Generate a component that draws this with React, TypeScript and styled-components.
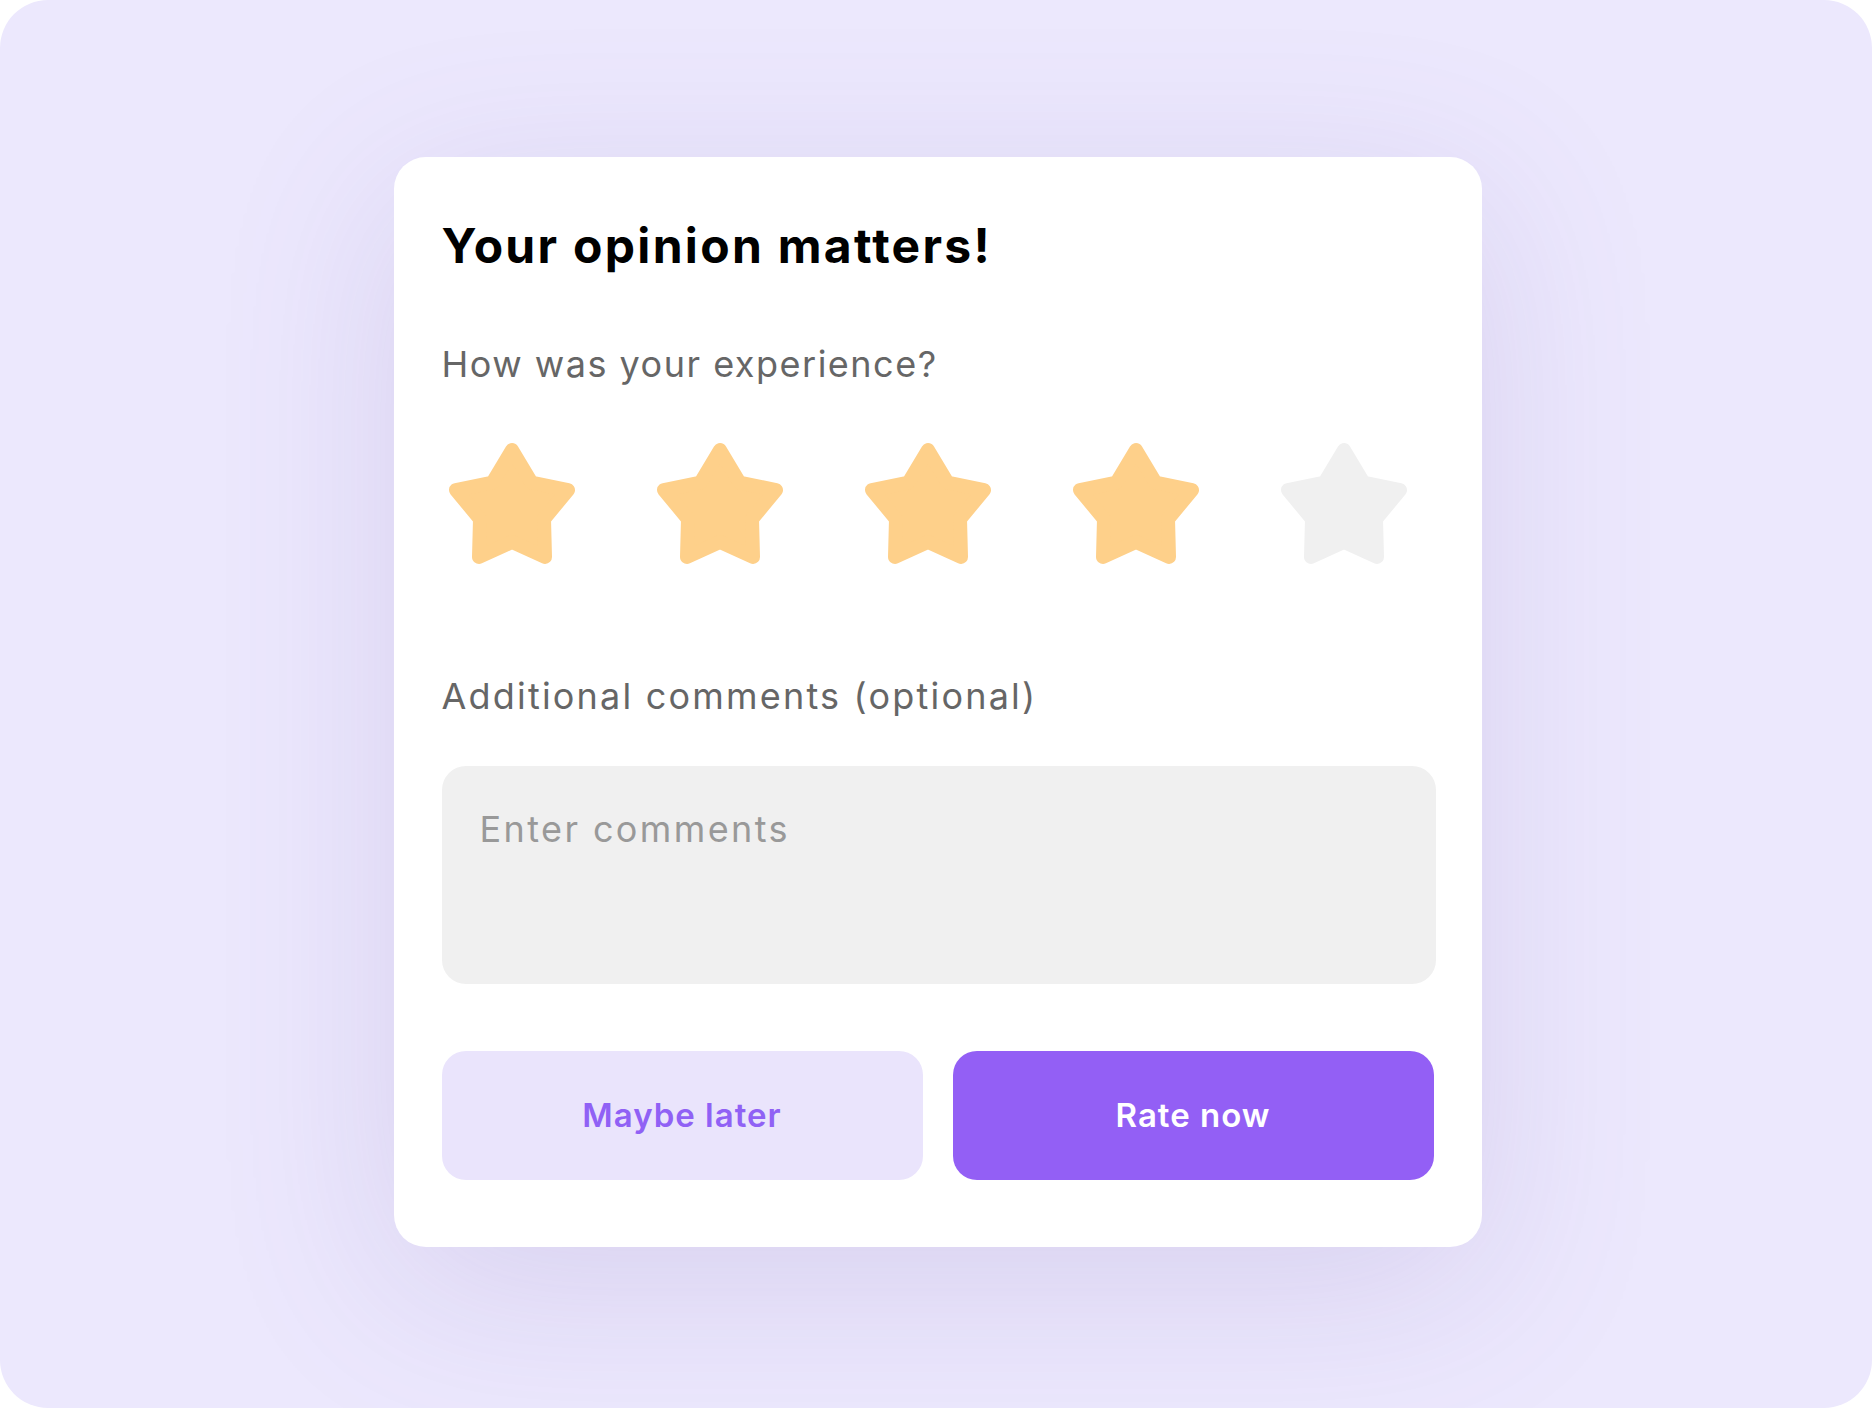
import React, { useState } from "react";
import styled, { createGlobalStyle } from "styled-components";

const GlobalStyle = createGlobalStyle`
  html, body {
    margin: 0;
    padding: 0;
    background: #ffffff;
  }
  * {
    box-sizing: border-box;
  }
`;

const Frame = styled.div`
  width: 1872px;
  height: 1408px;
  border-radius: 48px;
  background: #ece8fd;
  display: flex;
  align-items: center;
  justify-content: center;
  padding: 0 0 5px 3px;
  font-family: Inter, "Noto Sans", sans-serif;
`;

const Card = styled.div`
  width: 1088px;
  height: 1090px;
  background: #ffffff;
  border-radius: 32px;
  padding: 65px 48px 0 48px;
  display: flex;
  flex-direction: column;
  box-shadow: 0 40px 180px rgba(110, 90, 170, 0.16);
`;

const Title = styled.h1`
  margin: 0;
  font-size: 48px;
  line-height: 48px;
  font-weight: 700;
  color: #000000;
  letter-spacing: 2.3px;
`;

const Label = styled.div<{ $top: number; $spacing: number }>`
  margin-top: ${({ $top }) => $top}px;
  font-size: 36px;
  line-height: 36px;
  font-weight: 400;
  color: #666666;
  letter-spacing: ${({ $spacing }) => $spacing}px;
`;

const StarRow = styled.div`
  display: flex;
  gap: 80px;
  margin-top: 60px;
  padding-left: 6px;
`;

const StarButton = styled.button`
  border: none;
  background: none;
  padding: 0;
  cursor: pointer;
  width: 128px;
  height: 123px;
  display: block;
`;

const CommentBox = styled.textarea`
  margin-top: 52px;
  width: 994px;
  height: 218px;
  border: none;
  outline: none;
  resize: none;
  border-radius: 24px;
  background: #f0f0f0;
  padding: 39px 38px;
  font-family: Inter, "Noto Sans", sans-serif;
  font-size: 36px;
  line-height: 48px;
  letter-spacing: 2.4px;
  color: #333333;
  &::placeholder {
    color: #999999;
  }
`;

const ButtonRow = styled.div`
  margin-top: 67px;
  display: flex;
  gap: 30px;
  width: 992px;
`;

const ActionButton = styled.button<{ $primary?: boolean }>`
  flex: 1;
  height: 129px;
  border: none;
  border-radius: 24px;
  background: ${({ $primary }) => ($primary ? "#935ff5" : "#eae4fc")};
  color: ${({ $primary }) => ($primary ? "#ffffff" : "#9061f5")};
  font-family: Inter, "Noto Sans", sans-serif;
  font-size: 33px;
  font-weight: 600;
  letter-spacing: 1px;
  cursor: pointer;
`;

// rounded five point star, corners softened by a same-colour stroke
const Star = ({ filled }: { filled: boolean }) => {
  const color = filled ? "#fed08a" : "#f0f0f0";
  return (
    <svg width="128" height="123" viewBox="0 0 128 123">
      <polygon
        points="64,8 83.5,40.5 120,48 96,77 97,115 64,100 31,115 32,77 8,48 44.5,40.5"
        fill={color}
        stroke={color}
        strokeWidth="14"
        strokeLinejoin="round"
      />
    </svg>
  );
};

const App = () => {
  const [rating, setRating] = useState(4);
  const [comment, setComment] = useState("");

  return (
    <>
      <GlobalStyle />
      <Frame>
        <Card>
          <Title>Your opinion matters!</Title>
          <Label $top={76} $spacing={1.5}>
            How was your experience?
          </Label>
          <StarRow>
            {[1, 2, 3, 4, 5].map((n) => (
              <StarButton key={n} onClick={() => setRating(n)}>
                <Star filled={n <= rating} />
              </StarButton>
            ))}
          </StarRow>
          <Label $top={113} $spacing={2.2}>
            Additional comments (optional)
          </Label>
          <CommentBox
            placeholder="Enter comments"
            value={comment}
            onChange={(e) => setComment(e.target.value)}
          />
          <ButtonRow>
            <ActionButton>Maybe later</ActionButton>
            <ActionButton $primary>Rate now</ActionButton>
          </ButtonRow>
        </Card>
      </Frame>
    </>
  );
};

export default App;
